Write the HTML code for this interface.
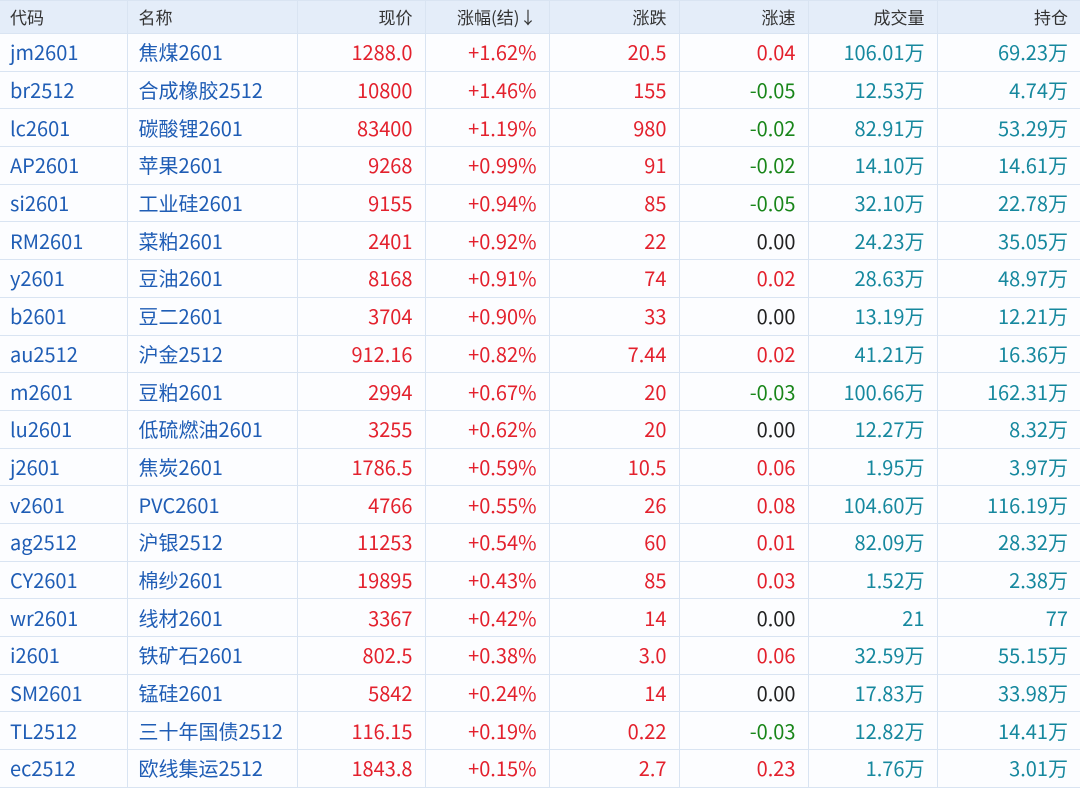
<!DOCTYPE html><html><head><meta charset="utf-8"><style>
body{margin:0;width:1080px;height:787px;overflow:hidden;background:#fff;font-family:"Noto Sans CJK SC","Liberation Sans",sans-serif;}
table{border-collapse:collapse;table-layout:fixed;width:1080px;}
td,th{border:1px solid #d9e4f2;padding:0 12px 0 0;text-align:right;font-size:20px;line-height:22px;white-space:nowrap;overflow:hidden;vertical-align:middle;}
th{height:32px;background:#e4edf9;color:#333;font-weight:normal;font-size:17px;}
td{height:36.7px;background:#fcfdff;}
tr>*:first-child{border-left:none;text-align:left;padding-left:10px;}
tr>*:nth-child(2){text-align:left;padding-left:11px;}
tr>*:last-child{border-right:none;}
.c{color:#1f5db5}.r{color:#e3212d}.g{color:#19861a}.k{color:#222}.t{color:#16889e}
</style></head><body><table>
<colgroup><col style="width:127px"><col style="width:170px"><col style="width:128px"><col style="width:124px"><col style="width:130px"><col style="width:129px"><col style="width:129px"><col style="width:143px"></colgroup>
<tr><th>代码</th><th>名称</th><th>现价</th><th>涨幅(结)↓</th><th>涨跌</th><th>涨速</th><th>成交量</th><th>持仓</th></tr>
<tr><td class="c">jm2601</td><td class="c">焦煤2601</td><td class="r">1288.0</td><td class="r">+1.62%</td><td class="r">20.5</td><td class="r">0.04</td><td class="t">106.01万</td><td class="t">69.23万</td></tr>
<tr><td class="c">br2512</td><td class="c">合成橡胶2512</td><td class="r">10800</td><td class="r">+1.46%</td><td class="r">155</td><td class="g">-0.05</td><td class="t">12.53万</td><td class="t">4.74万</td></tr>
<tr><td class="c">lc2601</td><td class="c">碳酸锂2601</td><td class="r">83400</td><td class="r">+1.19%</td><td class="r">980</td><td class="g">-0.02</td><td class="t">82.91万</td><td class="t">53.29万</td></tr>
<tr><td class="c">AP2601</td><td class="c">苹果2601</td><td class="r">9268</td><td class="r">+0.99%</td><td class="r">91</td><td class="g">-0.02</td><td class="t">14.10万</td><td class="t">14.61万</td></tr>
<tr><td class="c">si2601</td><td class="c">工业硅2601</td><td class="r">9155</td><td class="r">+0.94%</td><td class="r">85</td><td class="g">-0.05</td><td class="t">32.10万</td><td class="t">22.78万</td></tr>
<tr><td class="c">RM2601</td><td class="c">菜粕2601</td><td class="r">2401</td><td class="r">+0.92%</td><td class="r">22</td><td class="k">0.00</td><td class="t">24.23万</td><td class="t">35.05万</td></tr>
<tr><td class="c">y2601</td><td class="c">豆油2601</td><td class="r">8168</td><td class="r">+0.91%</td><td class="r">74</td><td class="r">0.02</td><td class="t">28.63万</td><td class="t">48.97万</td></tr>
<tr><td class="c">b2601</td><td class="c">豆二2601</td><td class="r">3704</td><td class="r">+0.90%</td><td class="r">33</td><td class="k">0.00</td><td class="t">13.19万</td><td class="t">12.21万</td></tr>
<tr><td class="c">au2512</td><td class="c">沪金2512</td><td class="r">912.16</td><td class="r">+0.82%</td><td class="r">7.44</td><td class="r">0.02</td><td class="t">41.21万</td><td class="t">16.36万</td></tr>
<tr><td class="c">m2601</td><td class="c">豆粕2601</td><td class="r">2994</td><td class="r">+0.67%</td><td class="r">20</td><td class="g">-0.03</td><td class="t">100.66万</td><td class="t">162.31万</td></tr>
<tr><td class="c">lu2601</td><td class="c">低硫燃油2601</td><td class="r">3255</td><td class="r">+0.62%</td><td class="r">20</td><td class="k">0.00</td><td class="t">12.27万</td><td class="t">8.32万</td></tr>
<tr><td class="c">j2601</td><td class="c">焦炭2601</td><td class="r">1786.5</td><td class="r">+0.59%</td><td class="r">10.5</td><td class="r">0.06</td><td class="t">1.95万</td><td class="t">3.97万</td></tr>
<tr><td class="c">v2601</td><td class="c">PVC2601</td><td class="r">4766</td><td class="r">+0.55%</td><td class="r">26</td><td class="r">0.08</td><td class="t">104.60万</td><td class="t">116.19万</td></tr>
<tr><td class="c">ag2512</td><td class="c">沪银2512</td><td class="r">11253</td><td class="r">+0.54%</td><td class="r">60</td><td class="r">0.01</td><td class="t">82.09万</td><td class="t">28.32万</td></tr>
<tr><td class="c">CY2601</td><td class="c">棉纱2601</td><td class="r">19895</td><td class="r">+0.43%</td><td class="r">85</td><td class="r">0.03</td><td class="t">1.52万</td><td class="t">2.38万</td></tr>
<tr><td class="c">wr2601</td><td class="c">线材2601</td><td class="r">3367</td><td class="r">+0.42%</td><td class="r">14</td><td class="k">0.00</td><td class="t">21</td><td class="t">77</td></tr>
<tr><td class="c">i2601</td><td class="c">铁矿石2601</td><td class="r">802.5</td><td class="r">+0.38%</td><td class="r">3.0</td><td class="r">0.06</td><td class="t">32.59万</td><td class="t">55.15万</td></tr>
<tr><td class="c">SM2601</td><td class="c">锰硅2601</td><td class="r">5842</td><td class="r">+0.24%</td><td class="r">14</td><td class="k">0.00</td><td class="t">17.83万</td><td class="t">33.98万</td></tr>
<tr><td class="c">TL2512</td><td class="c">三十年国债2512</td><td class="r">116.15</td><td class="r">+0.19%</td><td class="r">0.22</td><td class="g">-0.03</td><td class="t">12.82万</td><td class="t">14.41万</td></tr>
<tr><td class="c">ec2512</td><td class="c">欧线集运2512</td><td class="r">1843.8</td><td class="r">+0.15%</td><td class="r">2.7</td><td class="r">0.23</td><td class="t">1.76万</td><td class="t">3.01万</td></tr>
</table></body></html>
